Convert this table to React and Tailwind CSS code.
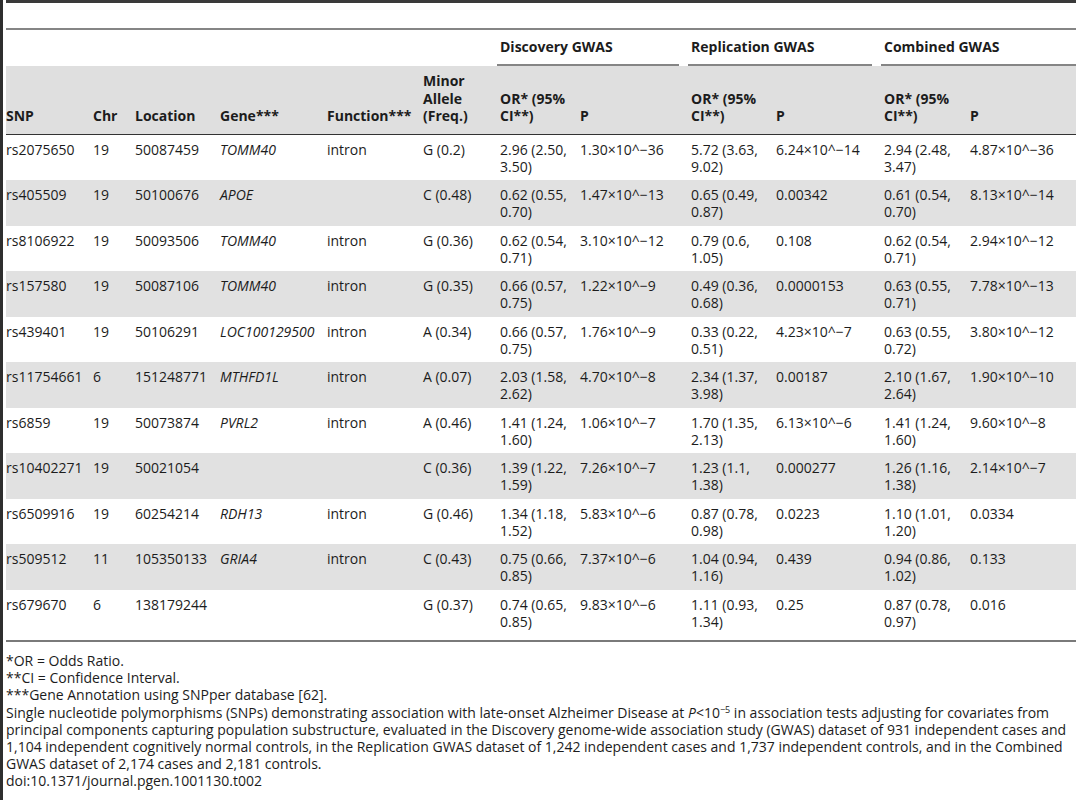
import React from 'react'

const rows = [
  ['rs2075650', '19', '50087459', 'TOMM40', 'intron', 'G (0.2)', '2.96 (2.50,|3.50)', '1.30×10^−36', '5.72 (3.63,|9.02)', '6.24×10^−14', '2.94 (2.48,|3.47)', '4.87×10^−36'],
  ['rs405509', '19', '50100676', 'APOE', '', 'C (0.48)', '0.62 (0.55,|0.70)', '1.47×10^−13', '0.65 (0.49,|0.87)', '0.00342', '0.61 (0.54,|0.70)', '8.13×10^−14'],
  ['rs8106922', '19', '50093506', 'TOMM40', 'intron', 'G (0.36)', '0.62 (0.54,|0.71)', '3.10×10^−12', '0.79 (0.6,|1.05)', '0.108', '0.62 (0.54,|0.71)', '2.94×10^−12'],
  ['rs157580', '19', '50087106', 'TOMM40', 'intron', 'G (0.35)', '0.66 (0.57,|0.75)', '1.22×10^−9', '0.49 (0.36,|0.68)', '0.0000153', '0.63 (0.55,|0.71)', '7.78×10^−13'],
  ['rs439401', '19', '50106291', 'LOC100129500', 'intron', 'A (0.34)', '0.66 (0.57,|0.75)', '1.76×10^−9', '0.33 (0.22,|0.51)', '4.23×10^−7', '0.63 (0.55,|0.72)', '3.80×10^−12'],
  ['rs11754661', '6', '151248771', 'MTHFD1L', 'intron', 'A (0.07)', '2.03 (1.58,|2.62)', '4.70×10^−8', '2.34 (1.37,|3.98)', '0.00187', '2.10 (1.67,|2.64)', '1.90×10^−10'],
  ['rs6859', '19', '50073874', 'PVRL2', 'intron', 'A (0.46)', '1.41 (1.24,|1.60)', '1.06×10^−7', '1.70 (1.35,|2.13)', '6.13×10^−6', '1.41 (1.24,|1.60)', '9.60×10^−8'],
  ['rs10402271', '19', '50021054', '', '', 'C (0.36)', '1.39 (1.22,|1.59)', '7.26×10^−7', '1.23 (1.1,|1.38)', '0.000277', '1.26 (1.16,|1.38)', '2.14×10^−7'],
  ['rs6509916', '19', '60254214', 'RDH13', 'intron', 'G (0.46)', '1.34 (1.18,|1.52)', '5.83×10^−6', '0.87 (0.78,|0.98)', '0.0223', '1.10 (1.01,|1.20)', '0.0334'],
  ['rs509512', '11', '105350133', 'GRIA4', 'intron', 'C (0.43)', '0.75 (0.66,|0.85)', '7.37×10^−6', '1.04 (0.94,|1.16)', '0.439', '0.94 (0.86,|1.02)', '0.133'],
  ['rs679670', '6', '138179244', '', '', 'G (0.37)', '0.74 (0.65,|0.85)', '9.83×10^−6', '1.11 (0.93,|1.34)', '0.25', '0.87 (0.78,|0.97)', '0.016'],
]

// column starts: 6, 93, 135, 220, 327, 423, 500, 580, 691, 776, 884, 970
const widths = ['w-[87px]', 'w-[42px]', 'w-[85px]', 'w-[107px]', 'w-[96px]', 'w-[77px]', 'w-[80px]', 'w-[111px]', 'w-[85px]', 'w-[108px]', 'w-[86px]', 'w-[106px]']

function Lines({ text }) {
  const parts = text.split('|')
  return parts.map((p, i) => (
    <React.Fragment key={i}>
      {p}
      {i < parts.length - 1 && <br />}
    </React.Fragment>
  ))
}

function GroupHead({ label, last }) {
  return (
    <th colSpan={2} className="p-0 pt-[8px] text-left align-top font-bold">
      <div className="h-[17px] whitespace-nowrap">{label}</div>
      <div className={`mt-[9px] h-[2px] -ml-[3px] bg-[#858585] ${last ? '' : 'mr-[12px]'}`} />
    </th>
  )
}

export default function App() {
  const head = ['SNP', 'Chr', 'Location', 'Gene***', 'Function***', 'Minor|Allele|(Freq.)', 'OR* (95%|CI**)', 'P', 'OR* (95%|CI**)', 'P', 'OR* (95%|CI**)', 'P']

  return (
    <div
      className="min-h-[800px] w-[1076px] border-l-[3px] border-[#2e2e2e] bg-white pl-[3px] text-[14px] text-[#1c1c1c]"
      style={{ fontFamily: '"Open Sans", "Liberation Sans", sans-serif' }}
    >
      <div className="h-[3px] bg-[#3a3a3a]" />
      <div className="h-[25px]" />
      <table className="w-[1070px] table-fixed border-collapse leading-[17px]">
        <colgroup>
          {widths.map((w, i) => (
            <col key={i} className={w} />
          ))}
        </colgroup>
        <thead>
          <tr className="border-t-2 border-[#858585]">
            <th colSpan={6} />
            <GroupHead label="Discovery GWAS" />
            <GroupHead label="Replication GWAS" />
            <GroupHead label="Combined GWAS" last />
          </tr>
          <tr className="border-b-[1.5px] border-[#333] bg-[#dfdfdf]">
            {head.map((h, i) => (
              <th key={i} className="h-[68px] whitespace-nowrap p-0 pb-[9px] pt-[6px] text-left align-bottom font-bold leading-[17.5px]">
                <Lines text={h} />
              </th>
            ))}
          </tr>
        </thead>
        <tbody>
          {rows.map((r, ri) => (
            <tr key={ri} className={ri % 2 === 1 ? 'bg-[#e1e1e1]' : 'bg-white'}>
              {r.map((c, ci) => (
                <td key={ci} className={`h-[45.5px] whitespace-nowrap p-0 pb-[5.5px] pt-[6px] align-top ${ci === 3 ? 'italic' : ''}`}>
                  <Lines text={c} />
                </td>
              ))}
            </tr>
          ))}
        </tbody>
      </table>
      <div className="h-[5px]" />
      <div className="h-[2px] bg-[#7a7a7a]" />
      <div className="pr-[2px] pt-[10px] leading-[17.2px]">
        <p>*OR = Odds Ratio.</p>
        <p>**CI = Confidence Interval.</p>
        <p>***Gene Annotation using SNPper database [62].</p>
        <p>
          Single nucleotide polymorphisms (SNPs) demonstrating association with late-onset Alzheimer Disease at{' '}
          <i>P</i>&lt;10<sup className="text-[9px] leading-none">−5</sup> in association tests adjusting for covariates from principal
          components capturing population substructure, evaluated in the Discovery genome-wide association study (GWAS)
          dataset of 931 independent cases and 1,104 independent cognitively normal controls, in the Replication GWAS
          dataset of 1,242 independent cases and 1,737 independent controls, and in the Combined GWAS dataset of 2,174
          cases and 2,181 controls.
        </p>
        <p>doi:10.1371/journal.pgen.1001130.t002</p>
      </div>
    </div>
  )
}
